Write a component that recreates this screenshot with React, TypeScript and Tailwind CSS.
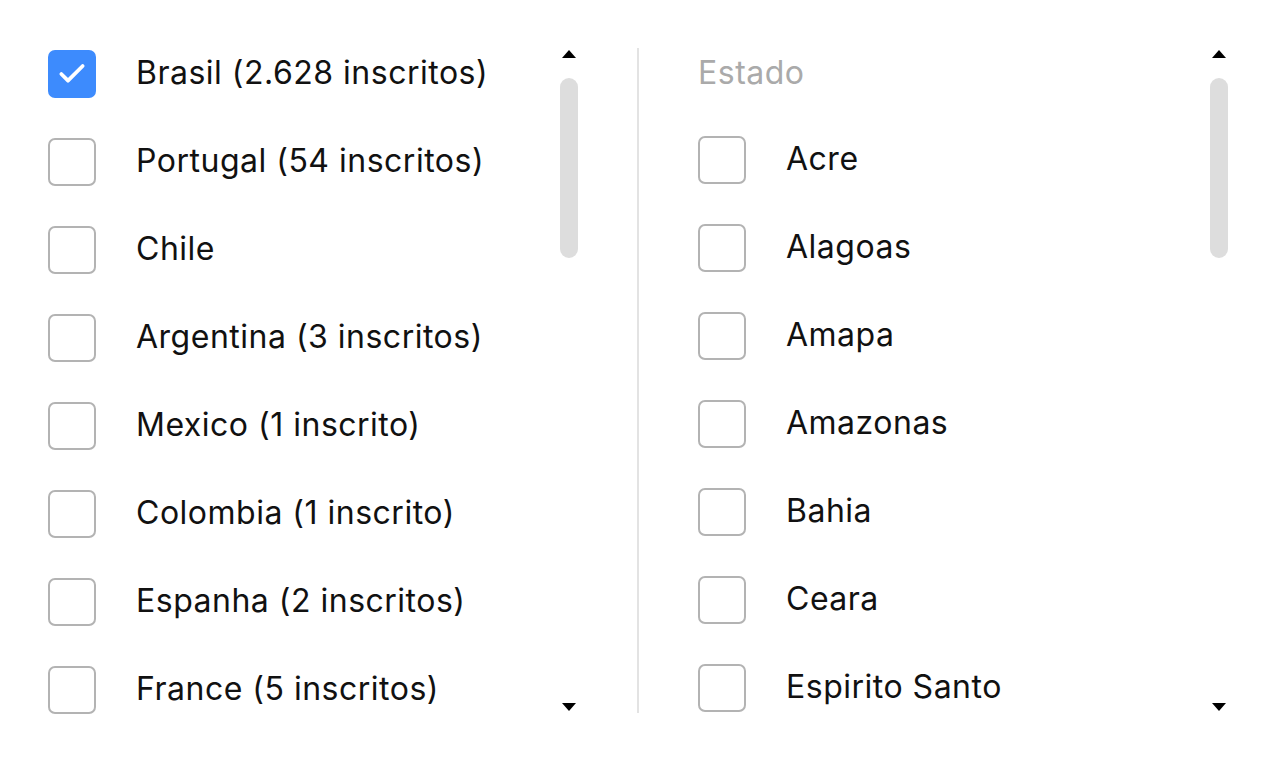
import { Check } from "lucide-react";

type Row = {
  id: number;
  label: string;
  checked?: boolean;
};

const countries: Row[] = [
  { id: 1, label: "Brasil (2.628 inscritos)", checked: true },
  { id: 2, label: "Portugal (54 inscritos)" },
  { id: 3, label: "Chile" },
  { id: 4, label: "Argentina (3 inscritos)" },
  { id: 5, label: "Mexico (1 inscrito)" },
  { id: 6, label: "Colombia (1 inscrito)" },
  { id: 7, label: "Espanha (2 inscritos)" },
  { id: 8, label: "France (5 inscritos)" },
];

const states: Row[] = [
  { id: 1, label: "Acre" },
  { id: 2, label: "Alagoas" },
  { id: 3, label: "Amapa" },
  { id: 4, label: "Amazonas" },
  { id: 5, label: "Bahia" },
  { id: 6, label: "Ceara" },
  { id: 7, label: "Espirito Santo" },
];

function Box({ checked }: { checked?: boolean }) {
  if (checked) {
    return (
      <div className="w-12 h-12 shrink-0 rounded-[7px] bg-[#3d8bfd] flex items-center justify-center">
        <Check className="w-8 h-8 text-white" strokeWidth={2.8} />
      </div>
    );
  }
  return <div className="w-12 h-12 shrink-0 rounded-[7px] border-2 border-[#b3b3b3] bg-white" />;
}

function Item({ row }: { row: Row }) {
  return (
    <div className="h-12 shrink-0 flex items-center">
      <Box checked={row.checked} />
      <span className="ml-10 -mt-[2px] text-[32px] tracking-[0.5px] text-[#111] whitespace-nowrap leading-none">{row.label}</span>
    </div>
  );
}

function Scrollbar() {
  return (
    <div className="w-[18px] shrink-0 flex flex-col items-center">
      <div className="mt-[2px] w-0 h-0 border-l-[7px] border-r-[7px] border-b-[8px] border-l-transparent border-r-transparent border-b-black" />
      <div className="mt-[20px] w-[18px] h-[180px] rounded-full bg-[#dddddd]" />
      <div className="flex-1" />
      <div className="mb-[3px] w-0 h-0 border-l-[7px] border-r-[7px] border-t-[8px] border-l-transparent border-r-transparent border-t-black" />
    </div>
  );
}

export default function App() {
  return (
    <div className="w-[1277px] h-[762px] bg-white font-['Inter',sans-serif] overflow-hidden">
      <div className="flex pl-12 pt-12 h-[714px]">
        <div className="w-[530px] h-full flex">
          <div className="flex-1 h-full overflow-hidden flex flex-col gap-10 pt-[2px]">
            {countries.map((c) => (
              <Item key={c.id} row={c} />
            ))}
          </div>
          <Scrollbar />
        </div>

        <div className="ml-[59px] w-[2px] h-[665px] bg-[#e3e3e3]" />

        <div className="ml-[59px] w-[530px] h-full flex">
          <div className="flex-1 h-full overflow-hidden flex flex-col pt-[2px]">
            <div className="h-12 shrink-0 flex items-center">
              <span className="-mt-[2px] text-[32px] tracking-[0.5px] text-[#aaaaaa] leading-none">Estado</span>
            </div>
            <div className="mt-[38px] flex flex-col gap-10">
              {states.map((s) => (
                <Item key={s.id} row={s} />
              ))}
            </div>
          </div>
          <Scrollbar />
        </div>
      </div>
    </div>
  );
}
